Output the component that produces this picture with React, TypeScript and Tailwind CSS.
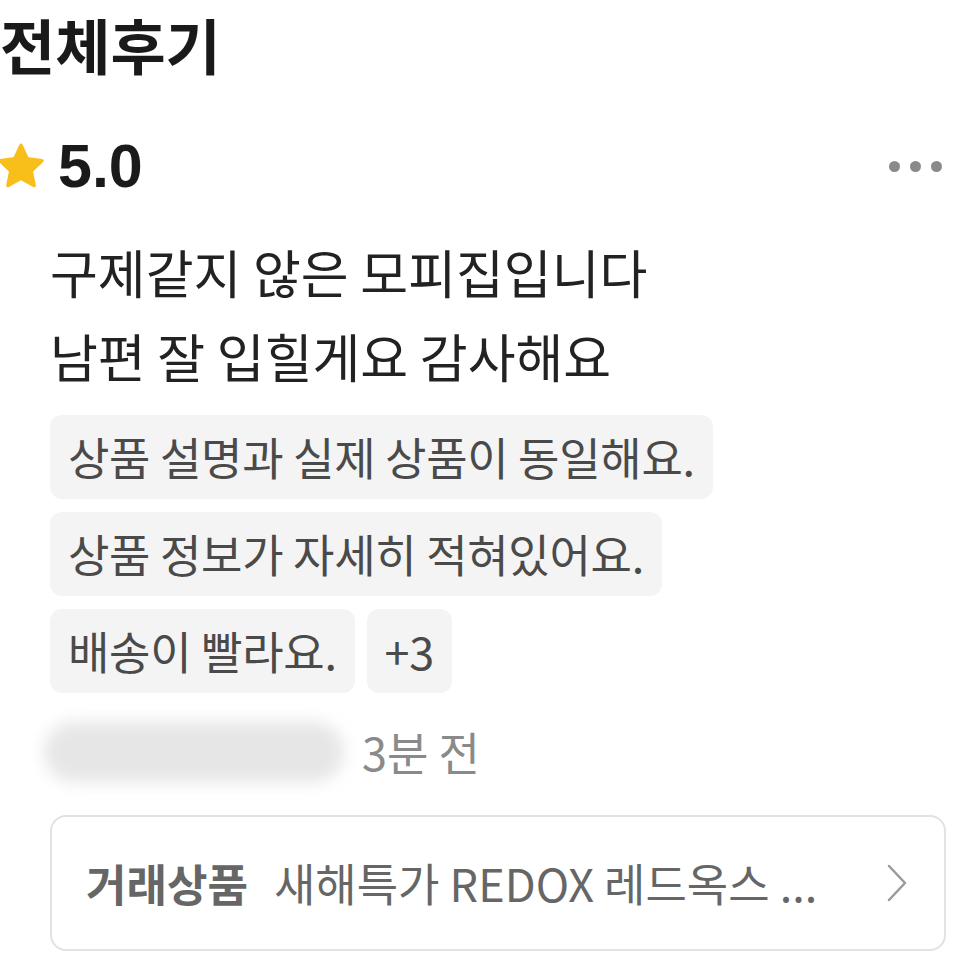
import React from "react";

const font = { fontFamily: '"Noto Sans CJK KR", "Noto Sans", sans-serif' };

function Chip({ children }: { children: React.ReactNode }) {
  return (
    <div className="rounded-[12px] bg-[#f4f4f4] px-[18px] h-[84px] flex items-center text-[45px] text-[#4a4a4a] tracking-[-0.3px]">
      {children}
    </div>
  );
}

export default function App() {
  return (
    <div className="w-[960px] h-[959px] bg-white overflow-hidden text-[#1a1a1a]" style={font}>
      <h1 className="text-[60px] font-bold leading-none pt-[14px]">전체후기</h1>
      <div className="flex items-center justify-between mt-[62px] pr-[18px]">
        <div className="flex items-center gap-[10px]">
          <svg width="54" height="54" viewBox="0 0 24 24" className="-ml-[6px]">
            <path
              d="M12 2.4l2.8 6 6.5.8-4.8 4.5 1.3 6.5L12 17l-5.8 3.2 1.3-6.5-4.8-4.5 6.5-.8z"
              fill="#f8bf1b"
              stroke="#f8bf1b"
              strokeWidth="1.6"
              strokeLinejoin="round"
            />
          </svg>
          <span className="text-[61px] font-bold leading-none" style={{ fontFamily: '"Liberation Sans", Arial, sans-serif' }}>5.0</span>
        </div>
        <div className="flex gap-[10px]">
          <span className="w-[11px] h-[11px] rounded-full bg-[#8a8a8a]" />
          <span className="w-[11px] h-[11px] rounded-full bg-[#8a8a8a]" />
          <span className="w-[11px] h-[11px] rounded-full bg-[#8a8a8a]" />
        </div>
      </div>
      <div className="pl-[50px] pr-[14px]">
        <p className="mt-[33px] text-[52px] leading-[84px] text-[#222]">
          구제같지 않은 모피집입니다
          <br />
          남편 잘 입힐게요 감사해요
        </p>
        <div className="mt-[17px] flex flex-col gap-[13px] items-start">
          <Chip>상품 설명과 실제 상품이 동일해요.</Chip>
          <Chip>상품 정보가 자세히 적혀있어요.</Chip>
          <div className="flex gap-[12px]">
            <Chip>배송이 빨라요.</Chip>
            <Chip>+3</Chip>
          </div>
        </div>
        <div className="mt-[26px] flex items-center h-[66px]">
          <div className="w-[300px] h-[60px] -ml-[6px] rounded-full bg-[#e6e6e6] blur-[8px]" />
          <span className="ml-[18px] text-[45px] text-[#8a8a8a]">3분 전</span>
        </div>
        <div className="mt-[30px] h-[136px] rounded-[16px] border-2 border-[#e2e2e2] flex items-center pl-[34px] pr-[36px]">
          <span className="text-[44px] font-bold text-[#666]">거래상품</span>
          <span className="ml-[26px] text-[45px] text-[#666] flex-1">새해특가 REDOX 레드옥스 ...</span>
          <svg width="22" height="40" viewBox="0 0 22 40" fill="none">
            <path d="M3 3l16 17L3 37" stroke="#9a9a9a" strokeWidth="2.5" strokeLinecap="round" strokeLinejoin="round" />
          </svg>
        </div>
      </div>
    </div>
  );
}
